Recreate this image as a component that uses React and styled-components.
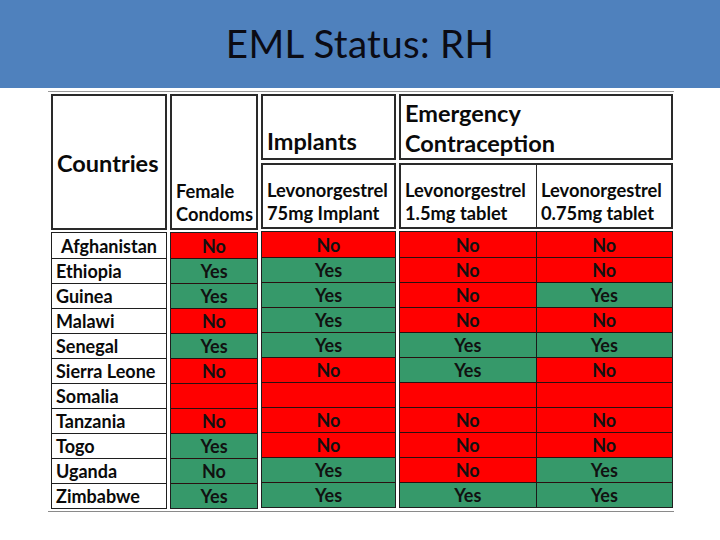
import React from "react";
import styled, { createGlobalStyle } from "styled-components";

const RED = "#ff0000";
const GREEN = "#36996a";

const rows = [
  ["Afghanistan", [["No", "r"], ["No", "r"], ["No", "r"], ["No", "r"]], "center"],
  ["Ethiopia", [["Yes", "g"], ["Yes", "g"], ["No", "r"], ["No", "r"]]],
  ["Guinea", [["Yes", "g"], ["Yes", "g"], ["No", "r"], ["Yes", "g"]]],
  ["Malawi", [["No", "r"], ["Yes", "g"], ["No", "r"], ["No", "r"]]],
  ["Senegal", [["Yes", "g"], ["Yes", "g"], ["Yes", "g"], ["Yes", "g"]]],
  ["Sierra Leone", [["No", "r"], ["No", "r"], ["Yes", "g"], ["No", "r"]]],
  ["Somalia", [["", "r"], ["", "r"], ["", "r"], ["", "r"]]],
  ["Tanzania", [["No", "r"], ["No", "r"], ["No", "r"], ["No", "r"]]],
  ["Togo", [["Yes", "g"], ["No", "r"], ["No", "r"], ["No", "r"]]],
  ["Uganda", [["No", "g"], ["Yes", "g"], ["No", "r"], ["Yes", "g"]]],
  ["Zimbabwe", [["Yes", "g"], ["Yes", "g"], ["Yes", "g"], ["Yes", "g"]]],
];

const GlobalStyle = createGlobalStyle`
  html, body {
    margin: 0;
    padding: 0;
    background: #fff;
  }
  body {
    width: 720px;
    height: 540px;
    overflow: hidden;
    font-family: Lato, "Open Sans", sans-serif;
  }
`;

const Slide = () => {
  return (
    <Page>
      <GlobalStyle />
      <TitleBar>
        <Title>EML Status: RH</Title>
      </TitleBar>
      <Frame>
        <Group width={116}>
          <HeaderBox height={136} valign="center">
            <BigLabel>Countries</BigLabel>
          </HeaderBox>
          <RowList>
            {rows.map(([name, , align]) => (
              <CountryCell key={name} align={align}>
                {name}
              </CountryCell>
            ))}
          </RowList>
        </Group>

        <Group width={88}>
          <HeaderBox height={136} valign="end">
            <SubLabel>
              Female
              <br />
              Condoms
            </SubLabel>
          </HeaderBox>
          <RowList>
            {rows.map(([name, cells]) => (
              <DataRow key={name}>
                <DataCell tone={cells[0][1]}>{cells[0][0]}</DataCell>
              </DataRow>
            ))}
          </RowList>
        </Group>

        <Group width={135}>
          <HeaderBox height={66} valign="end">
            <BigLabel>Implants</BigLabel>
          </HeaderBox>
          <HeaderBox height={66} valign="end" spaced>
            <SubLabel>
              Levonorgestrel
              <br />
              75mg Implant
            </SubLabel>
          </HeaderBox>
          <RowList>
            {rows.map(([name, cells]) => (
              <DataRow key={name}>
                <DataCell tone={cells[1][1]}>{cells[1][0]}</DataCell>
              </DataRow>
            ))}
          </RowList>
        </Group>

        <Group width={274}>
          <HeaderBox height={66} valign="center">
            <BigLabel>
              Emergency
              <br />
              Contraception
            </BigLabel>
          </HeaderBox>
          <SplitHeader>
            <SplitCell>
              <SubLabel>
                Levonorgestrel
                <br />
                1.5mg tablet
              </SubLabel>
            </SplitCell>
            <SplitCell>
              <SubLabel>
                Levonorgestrel
                <br />
                0.75mg tablet
              </SubLabel>
            </SplitCell>
          </SplitHeader>
          <RowList>
            {rows.map(([name, cells]) => (
              <DataRow key={name}>
                <DataCell tone={cells[2][1]}>{cells[2][0]}</DataCell>
                <DataCell tone={cells[3][1]} divided>
                  {cells[3][0]}
                </DataCell>
              </DataRow>
            ))}
          </RowList>
        </Group>
      </Frame>
    </Page>
  );
};

const Page = styled.div`
  width: 720px;
  height: 540px;
  background: #fff;
`;

const TitleBar = styled.header`
  height: 88px;
  background: #4f81bd;
  display: flex;
  align-items: center;
  justify-content: center;
`;

const Title = styled.h1`
  margin: 0;
  padding-bottom: 2px;
  font-family: Lato, "Open Sans", sans-serif;
  font-weight: 400;
  font-size: 38.5px;
  color: #0b0b14;
  letter-spacing: 0.3px;
`;

const Frame = styled.div`
  margin: 3px 0 0 48px;
  width: 626px;
  border-top: 1px solid #9a9a9a;
  border-bottom: 1.5px solid #8a8a8a;
  padding: 2px 0 2px 3px;
  box-sizing: border-box;
  display: flex;
  gap: 3px;
`;

const Group = styled.div`
  width: ${(p) => p.width}px;
  display: flex;
  flex-direction: column;
`;

const HeaderBox = styled.div`
  height: ${(p) => p.height}px;
  margin-top: ${(p) => (p.spaced ? "3px" : "0")};
  box-sizing: border-box;
  border: 2px solid #2a2a2a;
  padding: 3px 4px 2px;
  display: flex;
  flex-direction: column;
  justify-content: ${(p) => (p.valign === "end" ? "flex-end" : "center")};
`;

const SplitHeader = styled.div`
  margin-top: 3px;
  height: 66px;
  box-sizing: border-box;
  border: 2px solid #2a2a2a;
  display: grid;
  grid-template-columns: 1fr 1fr;
`;

const SplitCell = styled.div`
  padding: 3px 4px 2px;
  display: flex;
  flex-direction: column;
  justify-content: flex-end;

  & + & {
    border-left: 1.5px solid #2a2a2a;
  }
`;

const BigLabel = styled.div`
  font-weight: 700;
  font-size: 23.5px;
  line-height: 30px;
  color: #0a0a0a;
  white-space: nowrap;
`;

const SubLabel = styled.div`
  font-weight: 700;
  font-size: 18.3px;
  line-height: 23px;
  color: #0a0a0a;
  white-space: nowrap;
`;

const RowList = styled.div`
  margin-top: 2px;
  border: 1.5px solid #1f1f1f;
  display: flex;
  flex-direction: column;
`;

const CountryCell = styled.div`
  height: 25px;
  box-sizing: border-box;
  padding: 0 4px;
  display: flex;
  align-items: center;
  justify-content: ${(p) => (p.align === "center" ? "center" : "flex-start")};
  font-weight: 700;
  font-size: 18px;
  color: #0a0a0a;
  background: #fff;
  white-space: nowrap;

  & + & {
    border-top: 1.5px solid #1f1f1f;
  }
`;

const DataRow = styled.div`
  height: 25px;
  box-sizing: border-box;
  display: flex;

  & + & {
    border-top: 1.5px solid #2a1010;
  }
`;

const DataCell = styled.div`
  flex: 1;
  display: flex;
  align-items: center;
  justify-content: center;
  font-weight: 700;
  font-size: 18px;
  color: #111;
  background: ${(p) => (p.tone === "g" ? GREEN : RED)};
  border-left: ${(p) => (p.divided ? "1.5px solid #1a1a1a" : "none")};
`;

export default Slide;
